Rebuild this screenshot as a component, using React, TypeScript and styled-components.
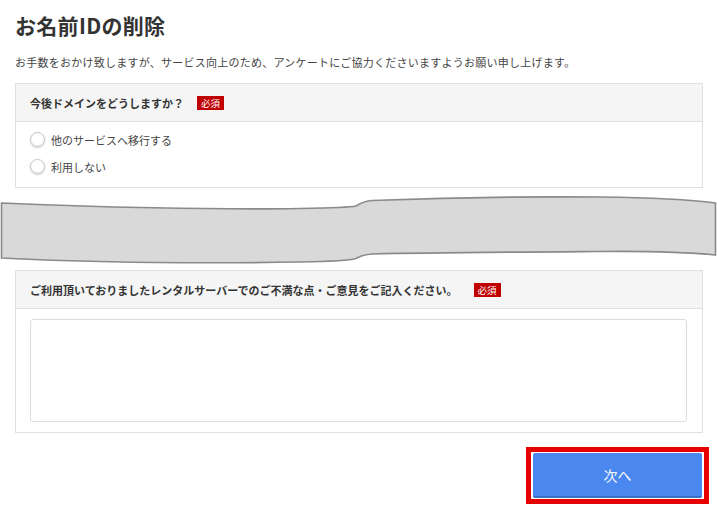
import React, { useState } from 'react';
import styled, { createGlobalStyle } from 'styled-components';

const GlobalStyle = createGlobalStyle`
  html, body {
    margin: 0;
    padding: 0;
    background: #fff;
  }
  body {
    font-family: 'Noto Sans CJK JP', 'Noto Sans', sans-serif;
    color: #444;
  }
`;

const options = ['他のサービスへ移行する', '利用しない'];

const App = () => {
  const [choice, setChoice] = useState<string>('');
  const [opinion, setOpinion] = useState<string>('');

  return (
    <Page>
      <GlobalStyle />
      <Title>お名前IDの削除</Title>
      <Lead>
        お手数をおかけ致しますが、サービス向上のため、アンケートにご協力くださいますようお願い申し上げます。
      </Lead>

      <Panel>
        <PanelHeader>
          今後ドメインをどうしますか？<Required gap={13}>必須</Required>
        </PanelHeader>
        <OptionList>
          {options.map(label => (
            <OptionRow key={label}>
              <Radio
                type="radio"
                name="domain"
                checked={choice === label}
                onChange={() => setChoice(label)}
              />
              <span>{label}</span>
            </OptionRow>
          ))}
        </OptionList>
      </Panel>

      {/* 省略を示す切れ目の帯 */}
      <Torn viewBox="0 0 717 72" preserveAspectRatio="none">
        <path
          d="M1.5,9 C90,13 220,16 300,14.5 C330,14 350,13.5 356,12 C360,9.5 364,7 372,6.5 C450,3.5 540,2.5 600,3 C650,3.5 690,5.5 715.5,9 L715.5,61 C690,58.5 640,57 597,57.5 C520,58 430,58.5 372,60 C364,60.5 360,62 356,64.5 C348,67 330,67.5 300,68 C220,69.5 90,69 1.5,64 Z"
          fill="#d9d9d9"
          stroke="#8a8a8a"
          strokeWidth="1.6"
        />
      </Torn>

      <Panel>
        <PanelHeader>
          ご利用頂いておりましたレンタルサーバーでのご不満な点・ご意見をご記入ください。
          <Required gap={16}>必須</Required>
        </PanelHeader>
        <TextBody>
          <Comment value={opinion} onChange={e => setOpinion(e.target.value)} />
        </TextBody>
      </Panel>

      <Actions>
        <Highlight>
          <NextButton type="button">次へ</NextButton>
        </Highlight>
      </Actions>
    </Page>
  );
};

export default App;

const Page = styled.div`
  width: 688px;
  padding: 0 14px 0 15px;
`;

const Title = styled.h1`
  margin: 11px 0 0;
  font-size: 21px;
  line-height: 28px;
  font-weight: 700;
  color: #333;
  letter-spacing: 0.3px;
`;

const Lead = styled.p`
  margin: 15px 0 0;
  font-size: 11px;
  line-height: 16px;
  letter-spacing: 0.25px;
  color: #444;
  white-space: nowrap;
`;

const Panel = styled.section`
  margin-top: 13px;
  border: 1px solid #e0e0e0;
  background: #fff;

  & + svg {
    margin-top: 6px;
  }
  svg + & {
    margin-top: 4px;
  }
`;

const PanelHeader = styled.div`
  display: flex;
  align-items: center;
  height: 37px;
  padding: 0 14px;
  background: #f5f5f5;
  border-bottom: 1px solid #e0e0e0;
  font-size: 11px;
  font-weight: 700;
  color: #333;
  white-space: nowrap;
`;

const Required = styled.span<{ gap: number }>`
  display: inline-flex;
  align-items: center;
  justify-content: center;
  margin-left: ${({ gap }) => gap}px;
  height: 14px;
  padding: 0 4px;
  background: #c00000;
  color: #fff;
  font-size: 9.5px;
  font-weight: 400;
`;

const OptionList = styled.div`
  padding: 4px 14px 7px;
`;

const OptionRow = styled.label`
  display: flex;
  align-items: center;
  gap: 6px;
  height: 27px;
  font-size: 11px;
  color: #444;
  cursor: pointer;
`;

const Radio = styled.input`
  appearance: none;
  margin: 0;
  width: 15px;
  height: 15px;
  border-radius: 50%;
  border: 1px solid #c4c4c4;
  background: radial-gradient(circle at 50% 35%, #fff 55%, #f0f0f0 100%);
  box-shadow: 0 1px 2px rgba(0, 0, 0, 0.18);

  &:checked {
    background: radial-gradient(circle, #4a86e8 35%, #fff 40%);
  }
`;

const Torn = styled.svg`
  display: block;
  width: 717px;
  height: 72px;
  margin-left: -15px;
`;

const TextBody = styled.div`
  padding: 10px 15px 10px 14px;
`;

const Comment = styled.textarea`
  display: block;
  box-sizing: border-box;
  width: 100%;
  height: 103px;
  margin: 0;
  border: 1px solid #dcdcdc;
  border-radius: 3px;
  resize: none;
  font-family: inherit;
  font-size: 11px;
  outline: none;
`;

const Actions = styled.div`
  display: flex;
  justify-content: flex-end;
  padding: 14px 0 0;
  margin-right: -6px;
`;

/* 注目を促す赤枠 */
const Highlight = styled.div`
  display: flex;
  padding: 1px 2px;
  border: 5px solid #e60000;
`;

const NextButton = styled.button`
  width: 169px;
  height: 45px;
  border: none;
  border-bottom: 2px solid #3a6fc4;
  border-radius: 2px;
  background: #4a87ee;
  color: #fff;
  font-family: inherit;
  font-size: 14px;
  cursor: pointer;
`;
